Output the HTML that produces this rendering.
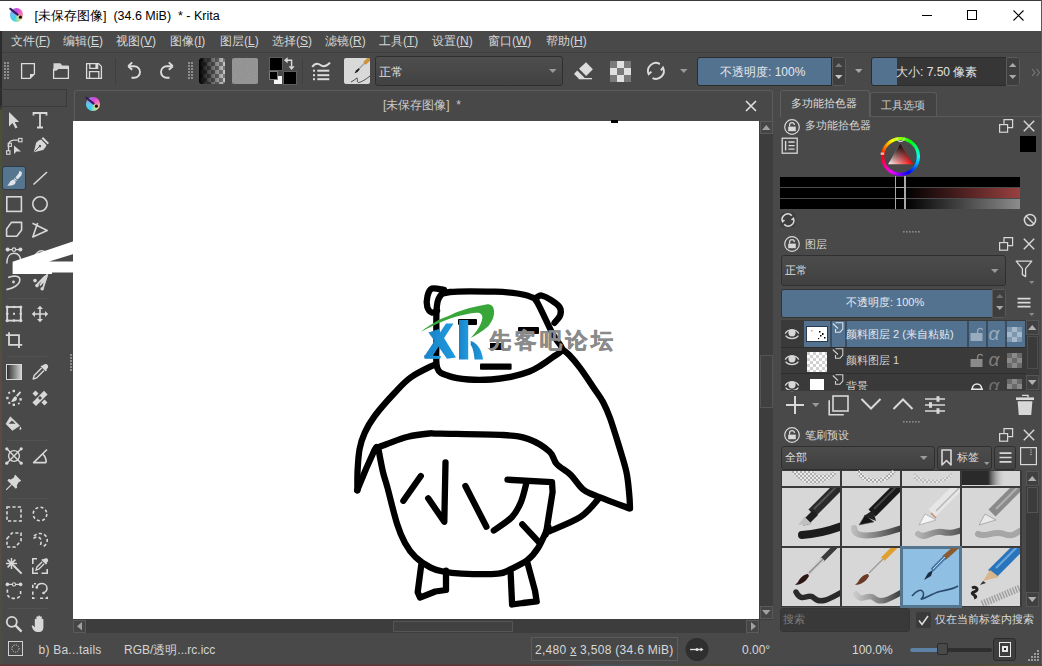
<!DOCTYPE html>
<html><head><meta charset="utf-8">
<style>
*{margin:0;padding:0;box-sizing:border-box}
html,body{width:1042px;height:666px;overflow:hidden;background:#494949;font-family:"Liberation Sans",sans-serif;font-size:12px;color:#d2d2d2}
.a{position:absolute}
.t{position:absolute;white-space:nowrap;line-height:1}
svg{position:absolute;overflow:visible}
</style></head><body>
<!-- window frame -->
<div class="a" style="left:0;top:0;width:1042px;height:666px;background:#494949"></div>
<!-- title bar -->
<div class="a" style="left:0;top:0;width:1042px;height:31px;background:#fff;border-top:1px solid #3a3a3a"></div>
<div class="a" style="left:1041px;top:0;width:1px;height:666px;background:#5a5a48"></div>
<div class="a" style="left:0;top:31px;width:2px;height:632px;background:linear-gradient(#2c2c2c 0,#2c2c2c 75px,#4a5236 80px,#4a5236 300px,#5a4a48 340px,#5a4a48 500px,#4e4e40 560px)"></div>
<div class="a" style="left:0;top:664px;width:1042px;height:2px;background:linear-gradient(90deg,#5a3a3a 0,#573c3c 560px,#46505a 600px,#4a4838 700px,#3e4450 850px,#4e4a38 1000px)"></div>
<div class="t" style="left:34.5px;top:9.5px;font-size:12.5px;color:#000">[未保存图像]&nbsp; (34.6 MiB)&nbsp; * - Krita</div>
<div class="a" style="left:9.7px;top:8.2px;width:13.6px;height:13.6px;border-radius:50%;background:conic-gradient(from 20deg,#e846d8 0deg,#f07ab0 60deg,#f4d890 110deg,#9ce0b0 150deg,#3cd0e8 190deg,#60c8f0 240deg,#8aa0f0 290deg,#c050e0 340deg,#e846d8 360deg)"></div>
<svg style="left:8.5px;top:7px" width="16" height="16"><path d="M1.4 1.8L8.6 7.6" stroke="#3a1a60" stroke-width="2.2" stroke-linecap="round"/><circle cx="11.4" cy="10.2" r="1.6" fill="#111"/></svg>
<!-- window controls -->
<div class="a" style="left:922px;top:15px;width:10px;height:1px;background:#000"></div>
<div class="a" style="left:967px;top:10px;width:10px;height:10px;border:1px solid #000"></div>
<svg style="left:1013px;top:10px" width="11" height="11"><path d="M0.5 0.5L10.5 10.5M10.5 0.5L0.5 10.5" stroke="#000" stroke-width="1.1"/></svg>

<!-- menu bar -->
<div class="a" style="left:2px;top:31px;width:1039px;height:21px;background:#494949"></div>
<div class="a" style="left:2px;top:52px;width:1039px;height:1px;background:#3e3e3e"></div>
<div class="t" style="left:11px;top:35px;font-size:12px;color:#d6d6d6">文件(<u>F</u>)</div>
<div class="t" style="left:63px;top:35px;font-size:12px;color:#d6d6d6">编辑(<u>E</u>)</div>
<div class="t" style="left:116px;top:35px;font-size:12px;color:#d6d6d6">视图(<u>V</u>)</div>
<div class="t" style="left:170px;top:35px;font-size:12px;color:#d6d6d6">图像(<u>I</u>)</div>
<div class="t" style="left:220px;top:35px;font-size:12px;color:#d6d6d6">图层(<u>L</u>)</div>
<div class="t" style="left:272px;top:35px;font-size:12px;color:#d6d6d6">选择(<u>S</u>)</div>
<div class="t" style="left:325px;top:35px;font-size:12px;color:#d6d6d6">滤镜(<u>R</u>)</div>
<div class="t" style="left:379px;top:35px;font-size:12px;color:#d6d6d6">工具(<u>T</u>)</div>
<div class="t" style="left:432px;top:35px;font-size:12px;color:#d6d6d6">设置(<u>N</u>)</div>
<div class="t" style="left:488px;top:35px;font-size:12px;color:#d6d6d6">窗口(<u>W</u>)</div>
<div class="t" style="left:546px;top:35px;font-size:12px;color:#d6d6d6">帮助(<u>H</u>)</div>

<!-- TOOLBAR -->
<!-- grips -->
<svg style="left:4px;top:62px" width="6" height="18"><g fill="#8c8c8c"><rect x="0" y="0" width="2" height="2"/><rect x="3" y="0" width="2" height="2"/><rect x="0" y="3" width="2" height="2"/><rect x="3" y="3" width="2" height="2"/><rect x="0" y="6" width="2" height="2"/><rect x="3" y="6" width="2" height="2"/><rect x="0" y="9" width="2" height="2"/><rect x="3" y="9" width="2" height="2"/><rect x="0" y="12" width="2" height="2"/><rect x="3" y="12" width="2" height="2"/><rect x="0" y="15" width="2" height="2"/><rect x="3" y="15" width="2" height="2"/></g></svg>
<svg style="left:188px;top:62px" width="6" height="18"><g fill="#8c8c8c"><rect x="0" y="0" width="2" height="2"/><rect x="3" y="0" width="2" height="2"/><rect x="0" y="3" width="2" height="2"/><rect x="3" y="3" width="2" height="2"/><rect x="0" y="6" width="2" height="2"/><rect x="3" y="6" width="2" height="2"/><rect x="0" y="9" width="2" height="2"/><rect x="3" y="9" width="2" height="2"/><rect x="0" y="12" width="2" height="2"/><rect x="3" y="12" width="2" height="2"/><rect x="0" y="15" width="2" height="2"/><rect x="3" y="15" width="2" height="2"/></g></svg>
<!-- new doc -->
<svg style="left:20px;top:62px" width="18" height="18"><path d="M1.6 1.6H14.4V12L10 16.4H1.6Z" fill="none" stroke="#dcdcdc" stroke-width="1.3"/><path d="M10 16.4V12H14.4Z" fill="#dcdcdc"/></svg>
<!-- folder -->
<svg style="left:52px;top:62px" width="18" height="18"><path d="M1.5 1.3H8.3L10.3 3.6H16.5V7H6.5L4.3 8.8H1.5Z" fill="#d4d4d4"/><path d="M1.6 6.5V16.4H16.4V4" fill="none" stroke="#dcdcdc" stroke-width="1.3"/></svg>
<!-- save -->
<svg style="left:85px;top:62px" width="18" height="18"><path d="M1.6 1.6H13.6L16.4 4.4V16.4H1.6Z" fill="none" stroke="#dcdcdc" stroke-width="1.3"/><path d="M4.8 1.6V6.4H12.6V1.6" fill="none" stroke="#dcdcdc" stroke-width="1.3"/><rect x="10.4" y="2" width="2.2" height="4" fill="#dcdcdc"/><path d="M4.5 16.4V9.6H13.8V16.4" fill="none" stroke="#dcdcdc" stroke-width="1.3"/></svg>
<div class="a" style="left:115px;top:58px;width:1px;height:26px;background:#3f3f3f"></div>
<!-- undo -->
<svg style="left:126px;top:61px" width="18" height="20"><path d="M3 5.2H8.2A5.8 5.8 0 0 1 8.2 16.8H5.5" fill="none" stroke="#dcdcdc" stroke-width="1.9"/><path d="M2.2 5.2L6.2 1.4M2.2 5.2L6.2 8.8" fill="none" stroke="#dcdcdc" stroke-width="1.9"/></svg>
<!-- redo -->
<svg style="left:157px;top:61px" width="18" height="20"><path d="M15 5.2H9.8A5.8 5.8 0 0 0 9.8 16.8H12.5" fill="none" stroke="#dcdcdc" stroke-width="1.9"/><path d="M15.8 5.2L11.8 1.4M15.8 5.2L11.8 8.8" fill="none" stroke="#dcdcdc" stroke-width="1.9"/></svg>
<!-- gradient swatch -->
<svg style="left:199px;top:58px" width="26" height="26">
<defs><pattern id="chk" width="8" height="8" patternUnits="userSpaceOnUse"><rect width="8" height="8" fill="#cacaca"/><rect width="4" height="4" fill="#7c7c7c"/><rect x="4" y="4" width="4" height="4" fill="#7c7c7c"/></pattern>
<linearGradient id="gbk" x1="0" x2="1"><stop offset="0" stop-color="#000"/><stop offset="1" stop-color="#000" stop-opacity="0"/></linearGradient>
<clipPath id="rr"><rect width="26" height="26" rx="2.5"/></clipPath></defs>
<g clip-path="url(#rr)"><rect width="26" height="26" fill="url(#chk)"/><rect width="26" height="26" fill="url(#gbk)"/></g></svg>
<!-- pattern swatch -->
<svg style="left:232px;top:58px" width="26" height="26"><defs><filter id="nz" x="0" y="0" width="100%" height="100%"><feTurbulence type="fractalNoise" baseFrequency="0.9" numOctaves="2" seed="3"/><feColorMatrix type="matrix" values="0 0 0 0 0.55  0 0 0 0 0.55  0 0 0 0 0.55  0 0 0 0.9 0"/></filter></defs><rect width="26" height="26" rx="2.5" fill="#8c8c8c"/><rect width="26" height="26" rx="2.5" fill="#000" filter="url(#nz)" opacity="0.35"/></svg>
<!-- fg/bg -->
<div class="a" style="left:269px;top:57px;width:14px;height:14px;background:#000;border:1px solid #5e5e5e"></div>
<div class="a" style="left:283px;top:71px;width:14px;height:14px;background:#000;border:1px solid #5e5e5e"></div>
<div class="a" style="left:274px;top:76px;width:8px;height:8px;background:#f4f4f4"></div>
<div class="a" style="left:269px;top:71px;width:9px;height:9px;background:#000;border:1px solid #7a7a7a"></div>
<svg style="left:283px;top:57px" width="14" height="14"><path d="M1 3.2L4.6 0.2V6.2Z" fill="#dcdcdc"/><path d="M4 3.2H8.6V9" fill="none" stroke="#dcdcdc" stroke-width="1.4"/><path d="M5.6 9.2H11.6L8.6 13Z" fill="#dcdcdc"/></svg>
<div class="a" style="left:302px;top:58px;width:1px;height:26px;background:#404040"></div>
<!-- brush presets icon -->
<svg style="left:311px;top:60px" width="21" height="21"><path d="M1.2 6.8C4 3 7 3.2 9.8 5.2S15.5 6.5 19 2.6" fill="none" stroke="#dcdcdc" stroke-width="2"/><g fill="#dcdcdc"><rect x="2" y="9.7" width="2" height="2"/><rect x="6.3" y="9.7" width="12" height="2"/><rect x="2" y="14.2" width="2" height="2"/><rect x="6.3" y="14.2" width="12" height="2"/><rect x="2" y="18.2" width="2" height="2"/><rect x="6.3" y="18.2" width="12" height="2"/></g></svg>
<!-- brush preset swatch -->
<div class="a" style="left:344px;top:58px;width:26px;height:26px;background:#d9d9d9;border-radius:2px;overflow:hidden">
<svg style="left:0;top:0" width="26" height="26"><path d="M10.5 15.5L12 12.5L15 10L16 11L13.5 14Z" fill="#1a1a1a"/><path d="M15.2 10.6L21.5 4.3" stroke="#b8b8b8" stroke-width="1.6"/><path d="M15.2 10.6L21.5 4.3" stroke="#777" stroke-width="0.5"/><path d="M20.5 5.5L26.5 -0.5" stroke="#d0903a" stroke-width="3.8"/><path d="M7 24C10 22.5 12 20.5 13 20S12.5 24.5 14.5 24.5S21 22 26 18" fill="none" stroke="#3a3a3a" stroke-width="0.9"/></svg></div>
<!-- combo -->
<div class="a" style="left:375px;top:56px;width:188px;height:30px;border:1px solid #2f2f2f;border-radius:3px;background:linear-gradient(#4e4e4e,#424242)"></div>
<div class="t" style="left:379px;top:66px;font-size:12px;color:#dedede">正常</div>
<svg style="left:549px;top:69px" width="8" height="4"><path d="M0 0H7.5L3.75 4Z" fill="#9a9a9a"/></svg>
<!-- eraser -->
<svg style="left:573px;top:61px" width="21" height="19"><path d="M13 1.2L19.9 8.2L13.2 14.9L6 7.8Z" fill="#dcdcdc"/><path d="M4.2 9.5L11.6 16.8L10.8 17.6H5.7L1 12.9Z" fill="#dcdcdc"/><rect x="5.7" y="17" width="13.3" height="1.3" fill="#dcdcdc"/></svg>
<!-- checker -->
<svg style="left:610px;top:61px" width="21" height="21"><rect width="21" height="21" fill="#e0e0e0"/><g fill="#7a7a7a"><rect x="0" y="0" width="7" height="7"/><rect x="14" y="0" width="7" height="7"/><rect x="7" y="7" width="7" height="7"/><rect x="0" y="14" width="7" height="7"/><rect x="14" y="14" width="7" height="7"/></g></svg>
<!-- reload -->
<svg style="left:645px;top:61px" width="21" height="20"><path d="M14.85 3.06A7.9 7.9 0 0 0 3.74 13.24L6.4 10.6" fill="none" stroke="#dcdcdc" stroke-width="1.9"/><path d="M7.56 17.06A7.9 7.9 0 0 0 18.06 6.56L15.9 9.4" fill="none" stroke="#dcdcdc" stroke-width="1.9"/></svg>
<svg style="left:680px;top:69px" width="8" height="4"><path d="M0 0H7.5L3.75 4Z" fill="#9a9a9a"/></svg>
<!-- opacity slider -->
<div class="a" style="left:697px;top:57px;width:149px;height:29px;border:1px solid #2c2c2c;border-radius:3px;background:#2c2c2c"></div>
<div class="a" style="left:698px;top:58px;width:133px;height:27px;background:#53728f;border-radius:2px 0 0 2px"></div>
<div class="a" style="left:832px;top:57px;width:14px;height:29px;border:1px solid #5a5a5a;border-radius:0 3px 3px 0;background:#3e3e3e"></div>
<div class="t" style="left:720px;top:66px;font-size:12px;color:#e4e8ec">不透明度: 100%</div>
<svg style="left:835px;top:63px" width="8" height="18"><path d="M0 4H7.5L3.75 0Z" fill="#7a7a7a"/><path d="M0 12H7.5L3.75 16Z" fill="#c8c8c8"/></svg>
<svg style="left:855px;top:69px" width="8" height="4"><path d="M0 0H7.5L3.75 4Z" fill="#a8a8a8"/></svg>
<!-- size slider -->
<div class="a" style="left:871px;top:57px;width:149px;height:29px;border:1px solid #2c2c2c;border-radius:3px;background:#363636"></div>
<div class="a" style="left:872px;top:58px;width:25px;height:27px;background:#53728f;border-radius:2px 0 0 2px"></div>
<div class="a" style="left:1006px;top:57px;width:14px;height:29px;border:1px solid #5a5a5a;border-radius:0 3px 3px 0;background:#3e3e3e"></div>
<div class="t" style="left:896px;top:66px;font-size:12px;color:#e0e0e0">大小: 7.50 像素</div>
<svg style="left:1009px;top:63px" width="8" height="18"><path d="M0 4H7.5L3.75 0Z" fill="#a8a8a8"/><path d="M0 12H7.5L3.75 16Z" fill="#a8a8a8"/></svg>
<svg style="left:1031px;top:68px" width="10" height="9"><path d="M1 1L4 4.5L1 8M5.5 1L8.5 4.5L5.5 8" fill="none" stroke="#7a7a7a" stroke-width="1.1"/></svg>


<!-- TOOLBOX -->
<div class="a" style="left:0px;top:89px;width:67px;height:18px;border:1px solid #3a3a3a;border-left:none"></div>
<div id="toolbox"><svg style="left:5px;top:111px" width="18" height="18"><path d="M4 1V15.5L7.5 12L10.5 17.5L12.5 16.5L9.7 11H14.2Z" fill="#d8d8d8"/></svg>
<svg style="left:31px;top:111px" width="18" height="18"><path d="M2.5 4.5V2H15.5V4.5M9 2V16.5M6 16.5H12" fill="none" stroke="#d8d8d8" stroke-width="1.8"/></svg>
<svg style="left:5px;top:137px" width="18" height="18"><path d="M3.5 14V8Q4 3.5 9 3.2H14" fill="none" stroke="#d8d8d8" stroke-width="1.3"/><rect x="1.6" y="13.8" width="3.4" height="3.4" fill="none" stroke="#d8d8d8" stroke-width="1.1"/><rect x="3.2" y="6.2" width="3.2" height="3.2" fill="none" stroke="#d8d8d8" stroke-width="1.1"/><rect x="13.6" y="1.4" width="3.4" height="3.4" fill="none" stroke="#d8d8d8" stroke-width="1.1"/><path d="M9 8.5V17L11.5 14.6L16 14.6Z" fill="#d8d8d8"/></svg>
<svg style="left:31px;top:137px" width="18" height="18"><g transform="translate(9.5 8.5) rotate(45)"><path d="M0 9.5L-5 1.2Q-5.4 -2.8 -3.8 -4.6H3.8Q5.4 -2.8 5 1.2Z" fill="#d8d8d8"/><rect x="-4.2" y="-7.8" width="8.4" height="2" fill="#d8d8d8"/><circle cx="0" cy="0.8" r="1.2" fill="#494949"/><path d="M0 2V8.6" stroke="#494949" stroke-width="0.9"/></g></svg>
<div class="a" style="left:2px;top:166px;width:24px;height:24px;background:#56758f;border:1px solid #2e3a46;border-radius:3px"></div>
<svg style="left:5px;top:169px" width="18" height="18"><path d="M14.6 1.8L17 3.2L16.4 6.5L12.5 10.5L10.4 8.6L13.6 4.6Z" fill="#dfe5ea"/><path d="M9.2 9.5L11.6 11.6" stroke="#dfe5ea" stroke-width="1.2"/><path d="M8.2 10.5C10 10.8 11 12.2 10.6 13.8C9.8 16.2 7 16.8 2 16.6C4 15.5 3.8 14 5.6 12Z" fill="#dfe5ea"/></svg>
<svg style="left:31px;top:169px" width="18" height="18"><path d="M2.5 15.5L16 3" fill="none" stroke="#d8d8d8" stroke-width="1.6"/></svg>
<svg style="left:5px;top:195px" width="18" height="18"><rect x="1.8" y="1.8" width="14.6" height="14.6" fill="none" stroke="#d8d8d8" stroke-width="1.6"/></svg>
<svg style="left:31px;top:195px" width="18" height="18"><circle cx="9" cy="9" r="7.2" fill="none" stroke="#d8d8d8" stroke-width="1.6"/></svg>
<svg style="left:5px;top:221px" width="18" height="18"><path d="M1.6 8L6.4 1.4H16.6V9L11.8 15.2H1.6Z" fill="none" stroke="#d8d8d8" stroke-width="1.6" stroke-linejoin="round"/></svg>
<svg style="left:31px;top:221px" width="18" height="18"><path d="M1.5 2.2L16.2 9.5L1.8 16L6.6 2" fill="none" stroke="#d8d8d8" stroke-width="1.6" stroke-linejoin="round"/></svg>
<svg style="left:5px;top:247px" width="18" height="18"><path d="M1.8 16.5C1.8 10 4.8 6.3 9 6.3S16 10 16 16.5" fill="none" stroke="#d8d8d8" stroke-width="1.5"/><path d="M2 2.6H16" fill="none" stroke="#d8d8d8" stroke-width="1.2"/><circle cx="2.6" cy="2.6" r="2" fill="#d8d8d8"/><circle cx="15.4" cy="2.6" r="2" fill="#d8d8d8"/><circle cx="9" cy="2.6" r="1.8" fill="#494949" stroke="#d8d8d8" stroke-width="1.2"/></svg>
<svg style="left:31px;top:247px" width="18" height="18"><path d="M2 14C3 7 8 3 12 4S16 9 14 12" fill="none" stroke="#d8d8d8" stroke-width="1.5"/></svg>
<svg style="left:5px;top:273px" width="18" height="18"><path d="M1.4 16.6C8 15.5 14.5 12 14.8 7C15 3 9 2 3.2 4.6" fill="none" stroke="#d8d8d8" stroke-width="1.6"/><circle cx="8.5" cy="9" r="1.4" fill="#d8d8d8"/></svg>
<svg style="left:31px;top:273px" width="18" height="18"><path d="M16.5 1.2L14 8L12 11L10 9L7 12L5.8 10.4L13 3Z" fill="#d8d8d8"/><path d="M16.5 1.2L9 12.5M16.5 1.2L12 15" fill="none" stroke="#d8d8d8" stroke-width="1.8"/><circle cx="4" cy="7.6" r="1.8" fill="#d8d8d8"/><circle cx="6" cy="12.6" r="1.8" fill="#d8d8d8"/><circle cx="11.2" cy="15.8" r="1.8" fill="#d8d8d8"/></svg>
<div class="a" style="left:7px;top:298px;width:40px;height:1px;background:#525252"></div>
<svg style="left:5px;top:305px" width="18" height="18"><rect x="2.2" y="2" width="13.6" height="13.6" fill="none" stroke="#d8d8d8" stroke-width="1.8"/><g fill="#d8d8d8"><circle cx="2.2" cy="2" r="1.6"/><circle cx="15.8" cy="2" r="1.6"/><circle cx="2.2" cy="15.6" r="1.6"/><circle cx="15.8" cy="15.6" r="1.6"/><circle cx="9" cy="2" r="1.3"/><circle cx="9" cy="15.6" r="1.3"/><circle cx="2.2" cy="8.8" r="1.3"/><circle cx="15.8" cy="8.8" r="1.3"/><rect x="8" y="7.8" width="2" height="2"/></g></svg>
<svg style="left:31px;top:305px" width="18" height="18"><path d="M9 2V16M2 9H16" fill="none" stroke="#d8d8d8" stroke-width="1.6"/><path d="M9 0.8L12 4H6Z M9 17.2L12 14H6Z M0.8 9L4 6V12Z M17.2 9L14 6V12Z" fill="#d8d8d8"/></svg>
<svg style="left:5px;top:331px" width="18" height="18"><path d="M4 1.2V13.8H17.2M0.8 4.2H14V17" fill="none" stroke="#d8d8d8" stroke-width="1.8"/></svg>
<div class="a" style="left:7px;top:356px;width:40px;height:1px;background:#525252"></div>
<div class="a" style="left:6px;top:364px;width:16px;height:16px;border:1.5px solid #d8d8d8;background:linear-gradient(90deg,#2e2e2e,#d0d0d0)"></div>
<svg style="left:31px;top:363px" width="18" height="18"><path d="M12.6 1.8C14 0.6 16.4 1 17 2.8S16.4 5.6 15.6 6.2L15.8 7.6L14.6 8.2L9.6 3.4L10.6 2.4L11.6 2.6Z" fill="#d8d8d8"/><path d="M10.6 5L3.2 12.4L2.2 16L5.8 14.8L13 7.6" fill="none" stroke="#d8d8d8" stroke-width="1.4" stroke-linejoin="round"/></svg>
<svg style="left:5px;top:389px" width="18" height="18"><g fill="#d8d8d8"><path d="M14.8 2.2L16.2 3.4L12.6 7.8L11 6.6Z"/><path d="M10.2 7.2C11.8 7.6 12.4 9 11.8 10.6C10.8 12.8 8.2 13 5.8 12.4C7.6 11.4 7.2 9.4 10.2 7.2Z"/><rect x="1.2" y="7.8" width="2.4" height="2.4"/><rect x="14.4" y="9.2" width="2.4" height="2.4"/><rect x="7.6" y="14.6" width="2.4" height="2.4"/><rect x="7.6" y="0.8" width="2.4" height="2.4"/><path d="M3 3.2L4.8 2.6L5.4 4.4L3.6 5Z"/><path d="M3 13.6L4.8 12.6L5.6 14.4L3.8 15.2Z"/><path d="M12.6 14.2L14.2 13.2L15 14.8L13.4 15.8Z"/></g></svg>
<svg style="left:31px;top:389px" width="18" height="18"><g fill="#d8d8d8"><path d="M13 1.8L16.6 5.4L5 17L1.4 13.4Z"/></g><g fill="#494949"><rect x="7.6" y="7.6" width="2.8" height="2.8" transform="rotate(45 9 9)"/></g><g fill="#d8d8d8"><rect x="2.4" y="2.4" width="4.2" height="4.2" transform="rotate(45 4.5 4.5)"/><rect x="11.4" y="11.4" width="4.2" height="4.2" transform="rotate(45 13.5 13.5)"/></g></svg>
<svg style="left:5px;top:415px" width="18" height="18"><path d="M5.3 1.8L14.6 10.7L7.4 15.4L1 8.9Z" fill="#d8d8d8" stroke="#d8d8d8" stroke-width="0.6" stroke-linejoin="round"/><path d="M3.6 8.7L6.9 5.4L10.6 8.7Z" fill="#494949"/><path d="M15.4 11.4C16.6 13 16.8 14.8 15.4 14.8S14.2 13 15.4 11.4Z" fill="#d8d8d8"/></svg>
<div class="a" style="left:7px;top:440px;width:40px;height:1px;background:#525252"></div>
<svg style="left:5px;top:447px" width="18" height="18"><path d="M1.8 1.8L16.2 16.2M16.2 1.8L1.8 16.2" fill="none" stroke="#d8d8d8" stroke-width="1.4"/><circle cx="9" cy="9" r="5.4" fill="none" stroke="#d8d8d8" stroke-width="1.4"/><g fill="#d8d8d8"><circle cx="1.8" cy="1.8" r="1.6"/><circle cx="16.2" cy="1.8" r="1.6"/><circle cx="1.8" cy="16.2" r="1.6"/><circle cx="16.2" cy="16.2" r="1.6"/></g></svg>
<svg style="left:31px;top:447px" width="18" height="18"><path d="M16 2.5L2.6 15.6H15.2" fill="none" stroke="#d8d8d8" stroke-width="1.6" stroke-linejoin="round"/><path d="M11.8 7.2C14 9 15.2 12 15.2 15.6" fill="none" stroke="#d8d8d8" stroke-width="1.6"/></svg>
<svg style="left:5px;top:473px" width="18" height="18"><path d="M10 1.6L16.2 7.8L13.4 9.4L11.8 12.4L12.2 14.6L10.8 15.8L2.4 7.4L3.6 6L5.8 6.4L8.8 4.8Z" fill="#d8d8d8"/><path d="M6.6 11.4L1.2 16.8" fill="none" stroke="#d8d8d8" stroke-width="1.2"/></svg>
<div class="a" style="left:7px;top:498px;width:40px;height:1px;background:#525252"></div>
<svg style="left:5px;top:505px" width="18" height="18"><rect x="2" y="2" width="14" height="14" fill="none" stroke="#d8d8d8" stroke-width="1.6" stroke-dasharray="3.2 2.2"/></svg>
<svg style="left:31px;top:505px" width="18" height="18"><circle cx="9" cy="9" r="6.8" fill="none" stroke="#d8d8d8" stroke-width="1.6" stroke-dasharray="3 2.4"/></svg>
<svg style="left:5px;top:531px" width="18" height="18"><path d="M2 7.6L7 2H16V10L10.2 16H2Z" fill="none" stroke="#d8d8d8" stroke-width="1.6" stroke-dasharray="3.2 2.2"/></svg>
<svg style="left:31px;top:531px" width="18" height="18"><path d="M3 5C6 1.5 13 1.5 15.5 6S14 15.5 11 16" fill="none" stroke="#d8d8d8" stroke-width="1.6" stroke-dasharray="3.2 2.2"/><path d="M2.5 7.5C5 5 9.5 6 10 9S9.5 14 9 15" fill="none" stroke="#d8d8d8" stroke-width="1.6" stroke-dasharray="3.2 2.2"/></svg>
<svg style="left:5px;top:557px" width="18" height="18"><path d="M6.5 1V12M1 6.5H12M2.6 2.6L10.4 10.4M10.4 2.6L2.6 10.4" fill="none" stroke="#d8d8d8" stroke-width="1.5"/><path d="M9 9L16.6 16.6" fill="none" stroke="#d8d8d8" stroke-width="2"/></svg>
<svg style="left:31px;top:557px" width="18" height="18"><path d="M1.8 7V1.8H6M1.8 10.5V16.2H7M10.5 16.2H16.2V12" fill="none" stroke="#d8d8d8" stroke-width="1.6"/><path d="M13 2C14.2 0.8 16.4 1 17 2.6S16.6 5 15.8 5.6L16 6.8L15 7.6L10.4 3L11.2 2L12 2.2Z" fill="#d8d8d8"/><path d="M11.2 4.8L5.8 10.2L5 13L7.8 12.2L13.2 6.8" fill="none" stroke="#d8d8d8" stroke-width="1.3"/></svg>
<svg style="left:5px;top:582px" width="18" height="18"><path d="M2.4 7.5V11.5C2.4 14 4.5 16.4 9 16.4S15.6 14 15.6 11.5V7.5" fill="none" stroke="#d8d8d8" stroke-width="1.6" stroke-dasharray="3.2 2.2"/><path d="M2.4 2.4H15.6" fill="none" stroke="#d8d8d8" stroke-width="1.2"/><circle cx="2.4" cy="2.4" r="1.8" fill="#d8d8d8"/><circle cx="15.6" cy="2.4" r="1.8" fill="#d8d8d8"/><circle cx="9" cy="2.4" r="1.6" fill="#494949" stroke="#d8d8d8" stroke-width="1.1"/></svg>
<svg style="left:31px;top:582px" width="18" height="18"><path d="M1.8 6V1.8H5M1.8 9.5V16.2H6M9 16.2H16.2V13" fill="none" stroke="#d8d8d8" stroke-width="1.6" stroke-dasharray="3.2 2.2"/><path d="M6 5C6.5 2.5 8.5 1.6 11 1.6C14 1.6 16 3.8 16 6.5C16 9 14.5 10 12.5 11" fill="none" stroke="#d8d8d8" stroke-width="1.5"/><circle cx="5.8" cy="5.4" r="1.3" fill="#d8d8d8"/><circle cx="12.5" cy="11" r="1.3" fill="#d8d8d8"/></svg>
<div class="a" style="left:7px;top:608px;width:40px;height:1px;background:#525252"></div>
<svg style="left:5px;top:615px" width="18" height="18"><circle cx="6.8" cy="6.8" r="5" fill="none" stroke="#d8d8d8" stroke-width="1.8"/><path d="M10.4 10.4L16.6 16.6" fill="none" stroke="#d8d8d8" stroke-width="2.4"/></svg>
<svg style="left:31px;top:615px" width="18" height="18"><path d="M3.8 9.5V4.6C3.8 3.6 5.4 3.6 5.4 4.6V8.5V2C5.4 1 7.2 1 7.2 2V8V1.2C7.2 0.2 9 0.2 9 1.2V8V2C9 1 10.8 1 10.8 2V8.6V4.4C10.8 3.4 12.4 3.4 12.4 4.4V12C12.4 15 11 17 8 17H6.4C4.4 17 3 16 1.8 14L0.8 11.6C0.4 10.6 1.6 10 2.4 10.8L3.8 12.4Z" fill="#d8d8d8"/></svg>
<svg style="left:70px;top:354px" width="3" height="18"><g fill="#8a8a8a"><rect y="0" width="2" height="2"/><rect y="3" width="2" height="2"/><rect y="6" width="2" height="2"/><rect y="9" width="2" height="2"/><rect y="12" width="2" height="2"/><rect y="15" width="2" height="2"/></g></svg></div>
<svg style="left:0;top:0" width="80" height="300"><path d="M73.5 241.2L12.6 261.8V274H52V272.6H73.5V261.6H49.2L73.5 254Z" fill="#fff"/></svg>
<!-- canvas tab area -->
<div class="a" style="left:74px;top:90px;width:699px;height:31px;background:#484848;border:1px solid #5c5c5c;border-bottom:none;border-radius:3px 3px 0 0"></div>
<div class="a" style="left:86.2px;top:97.2px;width:13.6px;height:13.6px;border-radius:50%;background:conic-gradient(from 20deg,#e846d8 0deg,#f07ab0 60deg,#f4d890 110deg,#9ce0b0 150deg,#3cd0e8 190deg,#60c8f0 240deg,#8aa0f0 290deg,#c050e0 340deg,#e846d8 360deg)"></div>
<svg style="left:85px;top:96px" width="16" height="16"><path d="M1.4 1.8L8.6 7.6" stroke="#3a1a60" stroke-width="2.2" stroke-linecap="round"/><circle cx="11.4" cy="10.2" r="1.6" fill="#111"/></svg>
<div class="t" style="left:383px;top:99px;font-size:12px;color:#c8c8c8">[未保存图像]&nbsp; *</div>
<svg style="left:745px;top:100px" width="12" height="12"><path d="M1 1L11 11M11 1L1 11" stroke="#e0e0e0" stroke-width="1.6"/></svg>
<!-- canvas -->
<div class="a" style="left:73px;top:121px;width:686px;height:499px;background:#fff"></div>
<svg style="left:0;top:0" width="1042" height="666">
<g fill="none" stroke="#000" stroke-width="6.3" stroke-linecap="round" stroke-linejoin="round">
<path d="M436.5 340.0C436.4 330.7 436.1 319.0 436.5 312.0C436.9 305.0 436.8 301.3 439.0 298.0C441.2 294.7 440.7 293.1 450.0 292.0C459.3 290.9 483.8 291.4 495.0 291.7C506.2 291.9 511.5 292.6 517.5 293.5C523.5 294.4 527.7 295.5 531.0 297.0C534.3 298.5 533.7 296.3 537.3 302.5C540.9 308.7 548.6 326.2 552.7 334.0C556.8 341.8 562.0 345.2 562.0 349.0C562.0 352.8 556.7 354.2 553.0 357.0C549.3 359.8 543.9 363.6 540.0 366.0C536.1 368.4 534.1 369.7 529.4 371.5C524.7 373.3 518.3 375.3 512.0 376.6C505.7 377.9 498.7 379.0 491.4 379.5C484.1 380.0 475.5 380.1 468.4 379.5C461.3 378.9 454.0 377.9 448.8 376.0C443.6 374.1 439.4 374.0 437.3 368.0C435.2 362.0 436.6 349.3 436.5 340.0Z"/>
<path d="M444.0 290.0C442.0 289.8 434.8 287.5 432.0 288.5C429.2 289.5 428.3 292.9 427.5 296.0C426.7 299.1 426.6 304.2 427.3 307.0C428.1 309.8 430.4 312.0 432.0 312.6C433.6 313.2 436.2 310.9 437.0 310.5"/>
<path d="M537.5 297.0C538.2 296.8 539.3 295.0 541.5 295.5C543.7 296.0 547.8 297.9 550.8 299.8C553.8 301.7 557.9 304.5 559.5 307.0C561.1 309.5 561.1 312.4 560.3 315.0C559.5 317.6 555.5 321.5 554.5 322.8"/>
<path d="M435.3 364.2C431.2 366.4 417.8 372.4 411.0 377.2C404.2 382.0 400.6 386.5 394.5 393.0C388.4 399.5 379.6 409.4 374.7 416.0C369.8 422.6 367.3 427.1 364.8 432.6C362.3 438.1 360.8 442.8 359.6 449.0C358.4 455.2 358.0 463.1 357.6 470.0C357.2 476.9 357.4 486.9 357.4 490.3"/>
<path d="M357.2 490.3L366.0 469.0L374.4 450.3L376.5 447.0"/>
<path d="M376.5 448.0C378.2 447.3 381.8 445.9 387.0 444.0C392.2 442.1 401.0 438.4 408.0 436.7C415.0 434.9 423.7 434.0 429.0 433.5C434.3 433.0 427.7 433.4 440.0 433.6C452.3 433.9 488.3 434.1 503.0 435.0C517.7 435.9 520.6 436.2 528.3 439.0C536.0 441.8 544.7 447.3 549.4 451.5C554.1 455.7 553.2 460.1 556.7 464.0C560.2 467.9 566.0 470.4 570.4 474.6C574.8 478.8 578.8 485.9 583.0 489.4C587.2 492.9 587.9 492.5 595.6 495.7C603.3 498.9 623.4 506.2 629.0 508.3"/>
<path d="M562.0 349.0C563.2 350.0 566.2 351.9 569.2 355.0C572.2 358.1 575.9 362.4 580.0 367.8C584.1 373.2 589.8 382.0 593.6 387.7C597.4 393.4 600.3 396.9 603.0 402.0C605.7 407.1 607.3 410.5 610.0 418.0C612.7 425.5 616.5 437.9 619.3 447.0C622.0 456.1 624.8 464.3 626.5 472.3C628.2 480.3 628.7 489.0 629.3 495.0C629.9 501.0 629.9 506.1 630.0 508.3"/>
<path d="M378.6 450.0C379.3 453.6 381.4 465.1 382.8 471.3C384.2 477.5 384.9 478.2 387.3 487.0C389.7 495.8 394.2 515.0 397.2 524.3C400.1 533.6 402.0 537.5 405.0 543.0C408.0 548.5 411.1 552.9 415.4 557.0C419.7 561.1 426.1 565.2 430.7 567.6C435.3 570.0 437.9 570.5 443.0 571.5C448.1 572.5 452.2 573.2 461.4 573.6C470.6 574.0 490.1 574.3 498.3 573.6C506.5 572.9 505.7 571.5 510.6 569.2C515.5 566.9 522.9 563.6 527.5 560.0C532.1 556.4 534.7 553.2 538.2 547.7C541.7 542.2 546.6 530.3 548.3 526.8"/>
<path d="M597.9 499.5C595.0 502.4 588.8 511.5 580.5 516.9C572.2 522.3 553.7 529.2 548.3 531.7"/>
<path d="M420.8 476.0L403.4 500.8"/>
<path d="M445.5 462.4L444.3 521.8L428.2 498.3"/>
<path d="M465.4 486.0L486.4 526.8"/>
<path d="M507.5 479.7L552.0 482.2L552.6 492.0L545.9 534.2"/>
<path d="M526.0 484.7C525.2 487.6 523.3 496.6 521.0 502.0C518.7 507.4 516.5 512.2 512.0 517.0C507.5 521.8 496.8 528.2 493.8 530.5"/>
<path d="M522.3 524.3L538.4 541.6"/>
<path d="M421.5 563.0L417.7 592.2L420.0 597.6L435.3 591.5L446.0 590.0L446.0 570.7"/>
<path d="M510.6 572.3L512.1 604.5L522.9 603.0L536.7 601.4L535.0 590.7L527.5 563.0"/>
</g>
<g fill="#000">
<rect x="480" y="363.4" width="31.6" height="6.3" rx="1"/>
<rect x="458" y="319" width="19" height="6" rx="1"/>
<rect x="518" y="327" width="21" height="7" rx="1"/>
<rect x="490" y="343" width="12" height="7"/>
<rect x="611" y="120" width="7" height="3"/>
</g>
<path d="M420.9 331.7C430 325 440 318.5 447.3 316.6C458 311 468 307.5 486.3 304.4C491 304 494 306 494.1 312C494 318 491.5 322 488.2 326.3C482 332 476 335 470.7 338C476 332 481 326 482.4 318C482.5 314 480 312.5 476.5 312.7C470 313 452 317 442.4 321.5C436 324 428 328 420.9 331.7Z" fill="#39a63a"/>
<defs><linearGradient id="blu" x1="0" x2="1"><stop offset="0" stop-color="#1b82c6"/><stop offset="1" stop-color="#1f9be0"/></linearGradient></defs>
<g fill="url(#blu)">
<path d="M428.5 332.5L438.5 329L456 357.6L447 358.8Z"/>
<path d="M446 323.4L453.5 323.4L431 358.5L424.5 356Z"/>
<path d="M424 355.5L441 356L440 359L424.5 358.8Z"/>
<rect x="459" y="320" width="9.2" height="39.5"/>
<path d="M470.7 341C477 342.5 482 350 483 359.5H474.5C474 352 472.5 347 470.7 345Z"/>
</g>
<g font-family="'Liberation Serif',serif" font-weight="900" font-size="22" fill="#8a8a8a" stroke="#8a8a8a" stroke-width="0.5" style="text-rendering:geometricPrecision">
<text x="489" y="348">先</text><text x="514.5" y="348">客</text><text x="540" y="348">吧</text><text x="565.5" y="348">论</text><text x="591" y="348">坛</text>
</g>
</svg>

<!-- v scrollbar -->
<div class="a" style="left:759px;top:121px;width:14px;height:499px;background:#3d3d3d"></div>
<!-- h scrollbar -->
<div class="a" style="left:73px;top:619px;width:687px;height:14px;background:#3d3d3d"></div>

<!-- status bar -->
<!--STATUS-->
<!-- v scrollbar parts -->
<div class="a" style="left:760px;top:121px;width:13px;height:13px;border:1px solid #5a5a5a;background:#454545"></div>
<svg style="left:762px;top:125px" width="9" height="5"><path d="M0 5H8.5L4.25 0Z" fill="#a0a0a0"/></svg>
<div class="a" style="left:760px;top:606px;width:13px;height:13px;border:1px solid #5a5a5a;background:#454545"></div>
<svg style="left:762px;top:610px" width="9" height="5"><path d="M0 0H8.5L4.25 5Z" fill="#a0a0a0"/></svg>
<div class="a" style="left:760px;top:355px;width:13px;height:53px;border:1px solid #555;background:#404040"></div>
<svg style="left:776px;top:353px" width="3" height="19"><g fill="#8a8a8a"><rect y="0" width="1.6" height="1.6"/><rect y="3" width="1.6" height="1.6"/><rect y="6" width="1.6" height="1.6"/><rect y="9" width="1.6" height="1.6"/><rect y="12" width="1.6" height="1.6"/><rect y="15" width="1.6" height="1.6"/></g></svg>
<!-- h scrollbar parts -->
<div class="a" style="left:73px;top:620px;width:13px;height:13px;border:1px solid #5a5a5a;background:#454545"></div>
<svg style="left:77px;top:622px" width="5" height="9"><path d="M5 0V8.5L0 4.25Z" fill="#a0a0a0"/></svg>
<div class="a" style="left:746px;top:620px;width:13px;height:13px;border:1px solid #5a5a5a;background:#454545"></div>
<svg style="left:751px;top:622px" width="5" height="9"><path d="M0 0V8.5L5 4.25Z" fill="#a0a0a0"/></svg>
<div class="a" style="left:393px;top:621px;width:120px;height:11px;border:1px solid #555;background:#414141"></div>
<div class="a" style="left:760px;top:620px;width:13px;height:13px;background:#494949"></div>
<!-- status bar -->
<div class="a" style="left:8px;top:641px;width:15px;height:15px;border:1.2px solid #d0d0d0"></div>
<svg style="left:10px;top:643px" width="11" height="11"><circle cx="5.5" cy="5.5" r="3.6" fill="none" stroke="#d0d0d0" stroke-width="1" stroke-dasharray="1.2 1.2"/></svg>
<div class="t" style="left:38.5px;top:644px;font-size:12px;color:#d4d4d4;letter-spacing:0.23px">b) Ba...tails</div>
<div class="t" style="left:124px;top:644px;font-size:12px;color:#d4d4d4">RGB/透明...rc.icc</div>
<div class="a" style="left:531px;top:637px;width:147px;height:24px;border:1px solid #5c5c5c;background:#474747"></div>
<div class="t" style="left:535px;top:644px;font-size:12px;color:#d8d8d8;letter-spacing:0.3px">2,480 <u>x</u> 3,508 (34.6 MiB)</div>
<svg style="left:685px;top:638px" width="24" height="24"><circle cx="12" cy="11.5" r="11.5" fill="#2f2f2f"/><path d="M5 11.5H17" stroke="#e0e0e0" stroke-width="1.3"/><circle cx="12" cy="11.5" r="1.5" fill="#e0e0e0"/><path d="M15.5 9.5L18.5 11.5L15.5 13.5Z" fill="#e0e0e0"/></svg>
<div class="t" style="left:742px;top:644px;font-size:12px;color:#d8d8d8">0.00°</div>
<div class="t" style="left:852px;top:644px;font-size:12px;color:#d8d8d8">100.0%</div>
<div class="a" style="left:910px;top:648px;width:82px;height:4px;border-radius:2px;background:#2f2f2f"></div>
<div class="a" style="left:910px;top:648px;width:30px;height:4px;border-radius:2px;background:#5d82a6"></div>
<div class="a" style="left:937px;top:643px;width:11px;height:12px;border-radius:2px;background:#4a4a4a;border:1px solid #2a2a2a"></div>
<div class="a" style="left:993px;top:638px;width:23px;height:23px;border-radius:3px;background:#3e3e3e;border:1px solid #2c2c2c"></div>
<div class="a" style="left:999px;top:642px;width:12px;height:15px;border:1.3px solid #e8e8e8"></div>
<div class="a" style="left:1002px;top:646px;width:6px;height:6px;background:#e8e8e8"></div>
<div class="a" style="left:1004px;top:648px;width:2px;height:2px;background:#222"></div>
<svg style="left:1025px;top:650px" width="16" height="14"><g fill="#9a9a9a"><rect x="12" y="0" width="2" height="2"/><rect x="9" y="3" width="2" height="2"/><rect x="12" y="3" width="2" height="2"/><rect x="6" y="6" width="2" height="2"/><rect x="9" y="6" width="2" height="2"/><rect x="12" y="6" width="2" height="2"/><rect x="3" y="9" width="2" height="2"/><rect x="6" y="9" width="2" height="2"/><rect x="9" y="9" width="2" height="2"/><rect x="12" y="9" width="2" height="2"/></g></svg>

<!--/STATUS-->

<!-- right dockers -->
<!--DOCK-->
<div class="a" style="left:773px;top:90px;width:7px;height:574px;background:#494949"></div>
<div class="a" style="left:870px;top:92px;width:67px;height:25px;background:#434343;border:1px solid #5a5a5a;border-bottom:none;border-radius:3px 3px 0 0"></div>
<div class="a" style="left:780px;top:116px;width:262px;height:1px;background:#5a5a5a"></div>
<div class="a" style="left:780px;top:90px;width:90px;height:27px;background:#494949;border:1px solid #5e5e5e;border-bottom:none;border-radius:3px 3px 0 0"></div>
<div class="t" style="left:791px;top:98px;font-size:11px;color:#dcdcdc;">多功能拾色器</div>
<div class="t" style="left:881px;top:99.5px;font-size:11px;color:#d0d0d0;">工具选项</div>
<svg style="left:784px;top:118.5px" width="16" height="16"><circle cx="8" cy="8" r="7.3" fill="none" stroke="#d8d8d8" stroke-width="1.2"/><rect x="4.2" y="7.6" width="7.6" height="4.6" fill="#d8d8d8"/><path d="M5.6 7.6V6A2.4 2.4 0 0 1 10.4 6" fill="none" stroke="#d8d8d8" stroke-width="1.2"/></svg>
<div class="t" style="left:805px;top:120px;font-size:11px;color:#d6d6d6;">多功能拾色器</div>
<svg style="left:999px;top:119px" width="15" height="14"><rect x="0.6" y="5.6" width="8" height="7.6" fill="none" stroke="#d8d8d8" stroke-width="1.2"/><path d="M5 5.6V0.6H13.6V8.6H8.6" fill="none" stroke="#d8d8d8" stroke-width="1.2"/></svg>
<svg style="left:1023px;top:119.5px" width="12" height="12"><path d="M0.8 0.8L11.2 11.2M11.2 0.8L0.8 11.2" stroke="#d8d8d8" stroke-width="1.4"/></svg>
<svg style="left:781px;top:137px" width="18" height="18"><rect x="1.2" y="1.2" width="15" height="15" fill="none" stroke="#d8d8d8" stroke-width="1.3"/><path d="M4.6 4V13.4" stroke="#d8d8d8" stroke-width="1.4"/><path d="M7.4 5H13.6M7.4 8.6H13.6M7.4 12.2H13.6" stroke="#d8d8d8" stroke-width="1.3"/></svg>
<div class="a" style="left:1020px;top:136px;width:16px;height:16px;background:#000"></div>
<svg style="left:880px;top:136px" width="41" height="41"><defs><clipPath id="ring"><path d="M0 -19.5A19.5 19.5 0 1 1 0 19.5A19.5 19.5 0 1 1 0 -19.5ZM0 -16.3A16.3 16.3 0 1 0 0 16.3A16.3 16.3 0 1 0 0 -16.3Z" clip-rule="evenodd" fill-rule="evenodd"/></clipPath><linearGradient id="tri1" x1="0" y1="0" x2="1" y2="0"><stop offset="0" stop-color="#fff"/><stop offset="1" stop-color="#f00"/></linearGradient><linearGradient id="tri2" x1="0" y1="0" x2="0" y2="1"><stop offset="0" stop-color="#000"/><stop offset="1" stop-color="#000" stop-opacity="0"/></linearGradient></defs><g transform="translate(20.5 20.5)"><g clip-path="url(#ring)"><path d="M0 0L20.00 0.00L19.87 2.26Z" fill="hsl(180,100%,50%)"/><path d="M0 0L19.92 1.74L19.60 3.99Z" fill="hsl(185,100%,50%)"/><path d="M0 0L19.70 3.47L19.18 5.68Z" fill="hsl(190,100%,50%)"/><path d="M0 0L19.32 5.18L18.61 7.33Z" fill="hsl(195,100%,50%)"/><path d="M0 0L18.79 6.84L17.90 8.92Z" fill="hsl(200,100%,50%)"/><path d="M0 0L18.13 8.45L17.05 10.45Z" fill="hsl(205,100%,50%)"/><path d="M0 0L17.32 10.00L16.08 11.90Z" fill="hsl(210,100%,50%)"/><path d="M0 0L16.38 11.47L14.98 13.25Z" fill="hsl(215,100%,50%)"/><path d="M0 0L15.32 12.86L13.77 14.51Z" fill="hsl(220,100%,50%)"/><path d="M0 0L14.14 14.14L12.45 15.65Z" fill="hsl(225,100%,50%)"/><path d="M0 0L12.86 15.32L11.04 16.68Z" fill="hsl(230,100%,50%)"/><path d="M0 0L11.47 16.38L9.54 17.58Z" fill="hsl(235,100%,50%)"/><path d="M0 0L10.00 17.32L7.97 18.34Z" fill="hsl(240,100%,50%)"/><path d="M0 0L8.45 18.13L6.35 18.97Z" fill="hsl(245,100%,50%)"/><path d="M0 0L6.84 18.79L4.67 19.45Z" fill="hsl(250,100%,50%)"/><path d="M0 0L5.18 19.32L2.96 19.78Z" fill="hsl(255,100%,50%)"/><path d="M0 0L3.47 19.70L1.22 19.96Z" fill="hsl(260,100%,50%)"/><path d="M0 0L1.74 19.92L-0.52 19.99Z" fill="hsl(265,100%,50%)"/><path d="M0 0L0.00 20.00L-2.26 19.87Z" fill="hsl(270,100%,50%)"/><path d="M0 0L-1.74 19.92L-3.99 19.60Z" fill="hsl(275,100%,50%)"/><path d="M0 0L-3.47 19.70L-5.68 19.18Z" fill="hsl(280,100%,50%)"/><path d="M0 0L-5.18 19.32L-7.33 18.61Z" fill="hsl(285,100%,50%)"/><path d="M0 0L-6.84 18.79L-8.92 17.90Z" fill="hsl(290,100%,50%)"/><path d="M0 0L-8.45 18.13L-10.45 17.05Z" fill="hsl(295,100%,50%)"/><path d="M0 0L-10.00 17.32L-11.90 16.08Z" fill="hsl(300,100%,50%)"/><path d="M0 0L-11.47 16.38L-13.25 14.98Z" fill="hsl(305,100%,50%)"/><path d="M0 0L-12.86 15.32L-14.51 13.77Z" fill="hsl(310,100%,50%)"/><path d="M0 0L-14.14 14.14L-15.65 12.45Z" fill="hsl(315,100%,50%)"/><path d="M0 0L-15.32 12.86L-16.68 11.04Z" fill="hsl(320,100%,50%)"/><path d="M0 0L-16.38 11.47L-17.58 9.54Z" fill="hsl(325,100%,50%)"/><path d="M0 0L-17.32 10.00L-18.34 7.97Z" fill="hsl(330,100%,50%)"/><path d="M0 0L-18.13 8.45L-18.97 6.35Z" fill="hsl(335,100%,50%)"/><path d="M0 0L-18.79 6.84L-19.45 4.67Z" fill="hsl(340,100%,50%)"/><path d="M0 0L-19.32 5.18L-19.78 2.96Z" fill="hsl(345,100%,50%)"/><path d="M0 0L-19.70 3.47L-19.96 1.22Z" fill="hsl(350,100%,50%)"/><path d="M0 0L-19.92 1.74L-19.99 -0.52Z" fill="hsl(355,100%,50%)"/><path d="M0 0L-20.00 0.00L-19.87 -2.26Z" fill="hsl(0,100%,50%)"/><path d="M0 0L-19.92 -1.74L-19.60 -3.99Z" fill="hsl(5,100%,50%)"/><path d="M0 0L-19.70 -3.47L-19.18 -5.68Z" fill="hsl(10,100%,50%)"/><path d="M0 0L-19.32 -5.18L-18.61 -7.33Z" fill="hsl(15,100%,50%)"/><path d="M0 0L-18.79 -6.84L-17.90 -8.92Z" fill="hsl(20,100%,50%)"/><path d="M0 0L-18.13 -8.45L-17.05 -10.45Z" fill="hsl(25,100%,50%)"/><path d="M0 0L-17.32 -10.00L-16.08 -11.90Z" fill="hsl(30,100%,50%)"/><path d="M0 0L-16.38 -11.47L-14.98 -13.25Z" fill="hsl(35,100%,50%)"/><path d="M0 0L-15.32 -12.86L-13.77 -14.51Z" fill="hsl(40,100%,50%)"/><path d="M0 0L-14.14 -14.14L-12.45 -15.65Z" fill="hsl(45,100%,50%)"/><path d="M0 0L-12.86 -15.32L-11.04 -16.68Z" fill="hsl(50,100%,50%)"/><path d="M0 0L-11.47 -16.38L-9.54 -17.58Z" fill="hsl(55,100%,50%)"/><path d="M0 0L-10.00 -17.32L-7.97 -18.34Z" fill="hsl(60,100%,50%)"/><path d="M0 0L-8.45 -18.13L-6.35 -18.97Z" fill="hsl(65,100%,50%)"/><path d="M0 0L-6.84 -18.79L-4.67 -19.45Z" fill="hsl(70,100%,50%)"/><path d="M0 0L-5.18 -19.32L-2.96 -19.78Z" fill="hsl(75,100%,50%)"/><path d="M0 0L-3.47 -19.70L-1.22 -19.96Z" fill="hsl(80,100%,50%)"/><path d="M0 0L-1.74 -19.92L0.52 -19.99Z" fill="hsl(85,100%,50%)"/><path d="M0 0L-0.00 -20.00L2.26 -19.87Z" fill="hsl(90,100%,50%)"/><path d="M0 0L1.74 -19.92L3.99 -19.60Z" fill="hsl(95,100%,50%)"/><path d="M0 0L3.47 -19.70L5.68 -19.18Z" fill="hsl(100,100%,50%)"/><path d="M0 0L5.18 -19.32L7.33 -18.61Z" fill="hsl(105,100%,50%)"/><path d="M0 0L6.84 -18.79L8.92 -17.90Z" fill="hsl(110,100%,50%)"/><path d="M0 0L8.45 -18.13L10.45 -17.05Z" fill="hsl(115,100%,50%)"/><path d="M0 0L10.00 -17.32L11.90 -16.08Z" fill="hsl(120,100%,50%)"/><path d="M0 0L11.47 -16.38L13.25 -14.98Z" fill="hsl(125,100%,50%)"/><path d="M0 0L12.86 -15.32L14.51 -13.77Z" fill="hsl(130,100%,50%)"/><path d="M0 0L14.14 -14.14L15.65 -12.45Z" fill="hsl(135,100%,50%)"/><path d="M0 0L15.32 -12.86L16.68 -11.04Z" fill="hsl(140,100%,50%)"/><path d="M0 0L16.38 -11.47L17.58 -9.54Z" fill="hsl(145,100%,50%)"/><path d="M0 0L17.32 -10.00L18.34 -7.97Z" fill="hsl(150,100%,50%)"/><path d="M0 0L18.13 -8.45L18.97 -6.35Z" fill="hsl(155,100%,50%)"/><path d="M0 0L18.79 -6.84L19.45 -4.67Z" fill="hsl(160,100%,50%)"/><path d="M0 0L19.32 -5.18L19.78 -2.96Z" fill="hsl(165,100%,50%)"/><path d="M0 0L19.70 -3.47L19.96 -1.22Z" fill="hsl(170,100%,50%)"/><path d="M0 0L19.92 -1.74L19.99 0.52Z" fill="hsl(175,100%,50%)"/></g><path d="M-0.3 -13L12.7 7.8H-12.4Z" fill="url(#tri1)"/><path d="M-0.3 -13L12.7 7.8H-12.4Z" fill="url(#tri2)"/><path d="M-3.6 -18.6A3.6 3.6 0 0 0 3.6 -18.6" fill="none" stroke="#e8e8e8" stroke-width="1.1"/><rect x="-19.8" y="-4" width="3.4" height="2.4" fill="#ffb0b0"/></g></svg>
<div class="a" style="left:780px;top:177px;width:240px;height:10px;background:#000"></div>
<div class="a" style="left:780px;top:188px;width:240px;height:10px;background:linear-gradient(90deg,#000 0,#000 52%,#9a4040 100%)"></div>
<div class="a" style="left:780px;top:199px;width:240px;height:10px;background:linear-gradient(90deg,#000 0,#000 52%,#8c8c8c 100%)"></div>
<div class="a" style="left:780px;top:187px;width:240px;height:1px;background:#4a4a4a"></div>
<div class="a" style="left:780px;top:198px;width:240px;height:1px;background:#4a4a4a"></div>
<div class="a" style="left:894.5px;top:176px;width:1.6px;height:33px;background:#a8a8a8"></div>
<div class="a" style="left:904px;top:176px;width:1.6px;height:33px;background:#a8a8a8"></div>
<div class="a" style="left:895px;top:186.6px;width:10px;height:1.4px;background:#a8a8a8"></div>
<div class="a" style="left:895px;top:197.6px;width:10px;height:1.4px;background:#a8a8a8"></div>
<svg style="left:780px;top:212px" width="16" height="16"><rect x="0.5" y="0.5" width="15" height="15" rx="3" fill="#3e3e3e"/><path d="M11.8 3.6A5.6 5.6 0 0 0 2.6 9.6L4.5 8" fill="none" stroke="#d8d8d8" stroke-width="1.6"/><path d="M4.2 12.4A5.6 5.6 0 0 0 13.4 6.4L11.5 8" fill="none" stroke="#d8d8d8" stroke-width="1.6"/></svg>
<svg style="left:1023px;top:213px" width="14" height="14"><circle cx="7" cy="7" r="5.6" fill="none" stroke="#d8d8d8" stroke-width="1.5"/><path d="M3 3L11 11" stroke="#d8d8d8" stroke-width="1.5"/></svg>
<svg style="left:903px;top:231px" width="18" height="2"><rect x="0" y="0" width="1.6" height="1.6" fill="#8a8a8a"/><rect x="3" y="0" width="1.6" height="1.6" fill="#8a8a8a"/><rect x="6" y="0" width="1.6" height="1.6" fill="#8a8a8a"/><rect x="9" y="0" width="1.6" height="1.6" fill="#8a8a8a"/><rect x="12" y="0" width="1.6" height="1.6" fill="#8a8a8a"/><rect x="15" y="0" width="1.6" height="1.6" fill="#8a8a8a"/></svg>
<svg style="left:784px;top:236px" width="16" height="16"><circle cx="8" cy="8" r="7.3" fill="none" stroke="#d8d8d8" stroke-width="1.2"/><rect x="4.2" y="7.6" width="7.6" height="4.6" fill="#d8d8d8"/><path d="M5.6 7.6V6A2.4 2.4 0 0 1 10.4 6" fill="none" stroke="#d8d8d8" stroke-width="1.2"/></svg>
<div class="t" style="left:805px;top:239px;font-size:11px;color:#d6d6d6;">图层</div>
<svg style="left:999px;top:237px" width="15" height="14"><rect x="0.6" y="5.6" width="8" height="7.6" fill="none" stroke="#d8d8d8" stroke-width="1.2"/><path d="M5 5.6V0.6H13.6V8.6H8.6" fill="none" stroke="#d8d8d8" stroke-width="1.2"/></svg>
<svg style="left:1023px;top:237.5px" width="12" height="12"><path d="M0.8 0.8L11.2 11.2M11.2 0.8L0.8 11.2" stroke="#d8d8d8" stroke-width="1.4"/></svg>
<div class="a" style="left:781px;top:255px;width:225px;height:31px;border:1px solid #2f2f2f;border-radius:3px;background:linear-gradient(#4c4c4c,#404040)"></div>
<div class="t" style="left:785px;top:265px;font-size:11px;color:#dedede;">正常</div>
<svg style="left:991px;top:269px" width="8" height="4"><path d="M0 0H7.5L3.75 4Z" fill="#9a9a9a"/></svg>
<svg style="left:1015px;top:260px" width="18" height="18"><path d="M1.2 1.2H16.8L10.6 8.6V16.6L7.4 14.6V8.6Z" fill="none" stroke="#d8d8d8" stroke-width="1.3" stroke-linejoin="round"/></svg>
<svg style="left:1029px;top:281px" width="6" height="4"><path d="M0 0H5.5L2.75 3Z" fill="#8a8a8a"/></svg>
<div class="a" style="left:781px;top:289px;width:225px;height:29px;border:1px solid #333;border-radius:3px;background:#3c3c3c"></div>
<div class="a" style="left:782px;top:290px;width:210px;height:27px;background:#53728f;border-radius:2px 0 0 2px"></div>
<div class="a" style="left:992px;top:289px;width:14px;height:29px;border:1px solid #585858;border-radius:0 3px 3px 0;background:#3e3e3e"></div>
<div class="t" style="left:846px;top:297px;font-size:11px;color:#e6eaee;">不透明度: 100%</div>
<svg style="left:996px;top:294px" width="8" height="18"><path d="M0 4H7.5L3.75 0Z" fill="#6c6c6c"/><path d="M0 12H7.5L3.75 16Z" fill="#a8a8a8"/></svg>
<svg style="left:1017px;top:297px" width="14" height="12"><path d="M0.5 1.6H13.5M0.5 5.6H13.5M0.5 9.6H13.5" stroke="#d8d8d8" stroke-width="1.9"/></svg>
<svg style="left:1029px;top:313px" width="6" height="4"><path d="M0 0H5.5L2.75 3Z" fill="#8a8a8a"/></svg>
<div class="a" style="left:781px;top:320px;width:245px;height:70px;background:#3a3a3a"></div>
<div class="a" style="left:804px;top:321px;width:221px;height:26px;background:#53728f"></div>
<div class="a" style="left:830px;top:321px;width:1.5px;height:26px;background:#3b4d5e"></div>
<div class="a" style="left:845px;top:321px;width:1.5px;height:26px;background:#3b4d5e"></div>
<div class="a" style="left:967px;top:321px;width:1.5px;height:26px;background:#3b4d5e"></div>
<div class="a" style="left:986px;top:321px;width:1.5px;height:26px;background:#3b4d5e"></div>
<div class="a" style="left:1005px;top:321px;width:1.5px;height:26px;background:#3b4d5e"></div>
<div class="a" style="left:781px;top:347px;width:245px;height:1px;background:#2e2e2e"></div>
<div class="a" style="left:781px;top:373px;width:245px;height:1px;background:#2e2e2e"></div>
<svg style="left:784px;top:327px" width="16" height="14"><path d="M1.2 6.6C3.8 1.6 12.2 1.6 14.8 6.6" fill="none" stroke="#d8d8d8" stroke-width="1.2"/><circle cx="8" cy="5.8" r="3.6" fill="#d8d8d8"/><path d="M1.6 8.6C4.6 12.6 11.4 12.6 14.4 8.6" fill="none" stroke="#d8d8d8" stroke-width="1.1"/></svg>
<svg style="left:784px;top:353px" width="16" height="14"><path d="M1.2 6.6C3.8 1.6 12.2 1.6 14.8 6.6" fill="none" stroke="#d8d8d8" stroke-width="1.2"/><circle cx="8" cy="5.8" r="3.6" fill="#d8d8d8"/><path d="M1.6 8.6C4.6 12.6 11.4 12.6 14.4 8.6" fill="none" stroke="#d8d8d8" stroke-width="1.1"/></svg>
<svg style="left:784px;top:379px" width="16" height="14"><path d="M1.2 6.6C3.8 1.6 12.2 1.6 14.8 6.6" fill="none" stroke="#d8d8d8" stroke-width="1.2"/><circle cx="8" cy="5.8" r="3.6" fill="#d8d8d8"/><path d="M1.6 8.6C4.6 12.6 11.4 12.6 14.4 8.6" fill="none" stroke="#d8d8d8" stroke-width="1.1"/></svg>
<div class="a" style="left:806px;top:326px;width:22px;height:16px;background:#fff;border:1px solid #2a3a4a"></div>
<svg style="left:807px;top:327px" width="20" height="14"><g fill="#000"><rect x="12" y="4" width="1.5" height="1.5"/><rect x="15" y="6" width="1.5" height="2"/><rect x="13" y="8" width="1.5" height="1.5"/><rect x="17" y="10" width="1.5" height="1.5"/><rect x="11" y="11" width="1.2" height="1.2"/></g><rect x="4" y="3" width="1.5" height="1.5" fill="#d8a050"/></svg>
<svg style="left:807px;top:352px" width="20" height="20"><defs><pattern id="lchk" width="6" height="6" patternUnits="userSpaceOnUse"><rect width="6" height="6" fill="#fff"/><rect width="3" height="3" fill="#d0d0d0"/><rect x="3" y="3" width="3" height="3" fill="#d0d0d0"/></pattern></defs><rect width="20" height="20" fill="url(#lchk)"/></svg>
<div class="a" style="left:810px;top:379px;width:14px;height:11px;background:#fff"></div>
<svg style="left:832px;top:322px" width="12" height="11"><path d="M3.5 0.8H10.8V7L8 10.2H3.5V7" fill="none" stroke="#dde4ea" stroke-width="1.1"/><path d="M0.8 1.5L6 6.5" stroke="#dde4ea" stroke-width="1.1"/></svg>
<svg style="left:832px;top:348px" width="12" height="11"><path d="M3.5 0.8H10.8V7L8 10.2H3.5V7" fill="none" stroke="#d0d0d0" stroke-width="1.1"/><path d="M0.8 1.5L6 6.5" stroke="#d0d0d0" stroke-width="1.1"/></svg>
<svg style="left:832px;top:374px" width="12" height="11"><path d="M3.5 0.8H10.8V7L8 10.2H3.5V7" fill="none" stroke="#d0d0d0" stroke-width="1.1"/><path d="M0.8 1.5L6 6.5" stroke="#d0d0d0" stroke-width="1.1"/></svg>
<div class="t" style="left:846px;top:329px;font-size:11px;color:#e2e8ee;">颜料图层 2 (来自粘贴)</div>
<div class="t" style="left:846px;top:355px;font-size:11px;color:#d4d4d4;">颜料图层 1</div>
<div class="a" style="left:781px;top:373px;width:245px;height:17px;overflow:hidden"><div class="t" style="left:65px;top:8px;font-size:11px;color:#d4d4d4">背景</div></div>
<svg style="left:970px;top:327px" width="13" height="14"><rect x="0.5" y="6" width="12" height="8" fill="#98acbe"/><path d="M7.6 6V3.4A2.6 2.6 0 0 1 12.6 3" fill="none" stroke="#98acbe" stroke-width="1.3"/></svg>
<svg style="left:970px;top:353px" width="13" height="14"><rect x="0.5" y="6" width="12" height="8" fill="#8a8a8a"/><path d="M7.6 6V3.4A2.6 2.6 0 0 1 12.6 3" fill="none" stroke="#8a8a8a" stroke-width="1.3"/></svg>
<svg style="left:970px;top:380px" width="14" height="10"><path d="M1 9.2H13M2.4 8.6A4.6 4.6 0 0 1 11.6 8.6" fill="none" stroke="#e8e8e8" stroke-width="1.6"/></svg>
<div class="t" style="left:988.5px;top:324px;font-size:19px;color:#98acbe;font-style:italic">α</div>
<div class="t" style="left:988.5px;top:350px;font-size:19px;color:#7e7e7e;font-style:italic">α</div>
<div class="a" style="left:981px;top:373px;width:30px;height:17px;overflow:hidden"><div class="t" style="left:7.5px;top:3px;font-size:19px;color:#6e6e6e;font-style:italic">α</div></div>
<svg style="left:1007px;top:327px" width="15" height="15"><rect x="0" y="0" width="5" height="5" fill="#7d97ae"/><rect x="5" y="0" width="5" height="5" fill="#a5b9cb"/><rect x="10" y="0" width="5" height="5" fill="#7d97ae"/><rect x="0" y="5" width="5" height="5" fill="#a5b9cb"/><rect x="5" y="5" width="5" height="5" fill="#7d97ae"/><rect x="10" y="5" width="5" height="5" fill="#a5b9cb"/><rect x="0" y="10" width="5" height="5" fill="#7d97ae"/><rect x="5" y="10" width="5" height="5" fill="#a5b9cb"/><rect x="10" y="10" width="5" height="5" fill="#7d97ae"/></svg>
<svg style="left:1007px;top:353px" width="15" height="15"><rect x="0" y="0" width="5" height="5" fill="#6a6a6a"/><rect x="5" y="0" width="5" height="5" fill="#8a8a8a"/><rect x="10" y="0" width="5" height="5" fill="#6a6a6a"/><rect x="0" y="5" width="5" height="5" fill="#8a8a8a"/><rect x="5" y="5" width="5" height="5" fill="#6a6a6a"/><rect x="10" y="5" width="5" height="5" fill="#8a8a8a"/><rect x="0" y="10" width="5" height="5" fill="#6a6a6a"/><rect x="5" y="10" width="5" height="5" fill="#8a8a8a"/><rect x="10" y="10" width="5" height="5" fill="#6a6a6a"/></svg>
<div class="a" style="left:1007px;top:379px;width:15px;height:10px;overflow:hidden"><svg style="left:0;top:0" width="15" height="15"><rect x="0" y="0" width="5" height="5" fill="#6a6a6a"/><rect x="5" y="0" width="5" height="5" fill="#8a8a8a"/><rect x="10" y="0" width="5" height="5" fill="#6a6a6a"/><rect x="0" y="5" width="5" height="5" fill="#8a8a8a"/><rect x="5" y="5" width="5" height="5" fill="#6a6a6a"/><rect x="10" y="5" width="5" height="5" fill="#8a8a8a"/></svg></div>
<div class="a" style="left:1026px;top:320px;width:13px;height:70px;background:#3a3a3a"></div>
<div class="a" style="left:1026px;top:320px;width:13px;height:15px;border:1px solid #555;background:#404040"></div>
<svg style="left:1028px;top:325px" width="9" height="5"><path d="M0 5H8.5L4.25 0Z" fill="#b0b0b0"/></svg>
<div class="a" style="left:1027px;top:336px;width:11px;height:33px;border:1px solid #4e4e4e;background:#3a3a3a"></div>
<div class="a" style="left:1026px;top:375px;width:13px;height:15px;border:1px solid #555;background:#404040"></div>
<svg style="left:1028px;top:380px" width="9" height="5"><path d="M0 0H8.5L4.25 5Z" fill="#b0b0b0"/></svg>
<div class="a" style="left:781px;top:390px;width:260px;height:1px;background:#3c3c3c"></div>
<svg style="left:785px;top:395px" width="20" height="20"><path d="M10 1V19M1 10H19" stroke="#d8d8d8" stroke-width="2"/></svg>
<svg style="left:812px;top:403px" width="8" height="4"><path d="M0 0H7.5L3.75 4Z" fill="#9a9a9a"/></svg>
<svg style="left:828px;top:395px" width="21" height="21"><path d="M1.2 5.2V19.8H15.8" fill="none" stroke="#d8d8d8" stroke-width="1.6"/><rect x="5" y="1" width="15" height="15" fill="none" stroke="#d8d8d8" stroke-width="1.6"/></svg>
<svg style="left:860px;top:397px" width="22" height="14"><path d="M1.5 2L11 11.5L20.5 2" fill="none" stroke="#d8d8d8" stroke-width="2"/></svg>
<svg style="left:892px;top:397px" width="22" height="14"><path d="M1.5 12L11 2.5L20.5 12" fill="none" stroke="#d8d8d8" stroke-width="2"/></svg>
<svg style="left:924px;top:395px" width="22" height="20"><path d="M1 4H21M1 10H21M1 16H21" stroke="#d8d8d8" stroke-width="1.6"/><rect x="12.5" y="1.2" width="3" height="5.6" fill="#d8d8d8"/><rect x="5" y="7.2" width="3" height="5.6" fill="#d8d8d8"/><rect x="12.5" y="13.2" width="3" height="5.6" fill="#d8d8d8"/></svg>
<svg style="left:1015px;top:394px" width="20" height="22"><path d="M7 1.4H13V3.4" fill="none" stroke="#d8d8d8" stroke-width="1.4"/><rect x="1" y="3.4" width="18" height="2.6" fill="#d8d8d8"/><path d="M2.6 7.2H17.4L16.2 21H3.8Z" fill="#d8d8d8"/></svg>
<svg style="left:903px;top:421px" width="18" height="2"><rect x="0" y="0" width="1.6" height="1.6" fill="#8a8a8a"/><rect x="3" y="0" width="1.6" height="1.6" fill="#8a8a8a"/><rect x="6" y="0" width="1.6" height="1.6" fill="#8a8a8a"/><rect x="9" y="0" width="1.6" height="1.6" fill="#8a8a8a"/><rect x="12" y="0" width="1.6" height="1.6" fill="#8a8a8a"/><rect x="15" y="0" width="1.6" height="1.6" fill="#8a8a8a"/></svg>
<svg style="left:784px;top:427px" width="16" height="16"><circle cx="8" cy="8" r="7.3" fill="none" stroke="#d8d8d8" stroke-width="1.2"/><rect x="4.2" y="7.6" width="7.6" height="4.6" fill="#d8d8d8"/><path d="M5.6 7.6V6A2.4 2.4 0 0 1 10.4 6" fill="none" stroke="#d8d8d8" stroke-width="1.2"/></svg>
<div class="t" style="left:805px;top:430px;font-size:11px;color:#d6d6d6;">笔刷预设</div>
<svg style="left:999px;top:428px" width="15" height="14"><rect x="0.6" y="5.6" width="8" height="7.6" fill="none" stroke="#d8d8d8" stroke-width="1.2"/><path d="M5 5.6V0.6H13.6V8.6H8.6" fill="none" stroke="#d8d8d8" stroke-width="1.2"/></svg>
<svg style="left:1023px;top:428.5px" width="12" height="12"><path d="M0.8 0.8L11.2 11.2M11.2 0.8L0.8 11.2" stroke="#d8d8d8" stroke-width="1.4"/></svg>
<div class="a" style="left:781px;top:446px;width:154px;height:24px;border:1px solid #2f2f2f;border-radius:3px;background:linear-gradient(#4c4c4c,#404040)"></div>
<div class="t" style="left:785px;top:452px;font-size:11px;color:#dedede;">全部</div>
<svg style="left:920px;top:456px" width="8" height="4"><path d="M0 0H7.5L3.75 4Z" fill="#9a9a9a"/></svg>
<div class="a" style="left:937px;top:446px;width:55px;height:24px;border:1px solid #2f2f2f;border-radius:3px;background:linear-gradient(#4c4c4c,#424242)"></div>
<svg style="left:941px;top:449px" width="11" height="17"><path d="M1 1H10V16L5.5 11.5L1 16Z" fill="none" stroke="#d8d8d8" stroke-width="1.6" stroke-linejoin="round"/></svg>
<div class="t" style="left:957px;top:452px;font-size:11px;color:#dedede;">标签</div>
<svg style="left:984px;top:462px" width="6" height="4"><path d="M0 0H5.5L2.75 3Z" fill="#9a9a9a"/></svg>
<div class="a" style="left:994px;top:446px;width:22px;height:24px;border:1px solid #2f2f2f;border-radius:3px;background:linear-gradient(#4c4c4c,#424242)"></div>
<svg style="left:999px;top:452px" width="13" height="11"><path d="M0.5 1.2H12.5M0.5 5.5H12.5M0.5 9.8H12.5" stroke="#d8d8d8" stroke-width="1.7"/></svg>
<svg style="left:1020px;top:447px" width="17" height="19"><rect x="0.6" y="0.6" width="15.8" height="17" fill="none" stroke="#d8d8d8" stroke-width="1.2"/><path d="M11 2.5V8" stroke="#d8d8d8" stroke-width="1.1" stroke-dasharray="1.1 1.1"/></svg>
<div class="a" style="left:781px;top:470px;width:241px;height:137px;background:#3a3a3a"></div>
<div class="a" style="left:782px;top:471px;width:58px;height:15px;background:#d7d7d7"></div>
<div class="a" style="left:842px;top:471px;width:58px;height:15px;background:#d7d7d7"></div>
<div class="a" style="left:902px;top:471px;width:58px;height:15px;background:#d7d7d7"></div>
<div class="a" style="left:962px;top:471px;width:58px;height:15px;background:#d7d7d7"></div>
<div class="a" style="left:782px;top:488px;width:58px;height:58px;background:#d7d7d7"></div>
<div class="a" style="left:842px;top:488px;width:58px;height:58px;background:#d7d7d7"></div>
<div class="a" style="left:902px;top:488px;width:58px;height:58px;background:#d7d7d7"></div>
<div class="a" style="left:962px;top:488px;width:58px;height:58px;background:#d7d7d7"></div>
<div class="a" style="left:782px;top:548px;width:58px;height:58px;background:#d7d7d7"></div>
<div class="a" style="left:842px;top:548px;width:58px;height:58px;background:#d7d7d7"></div>
<div class="a" style="left:900px;top:546px;width:62px;height:62px;background:#56758f"></div>
<div class="a" style="left:903px;top:549px;width:56px;height:56px;background:#8fbfe2"></div>
<div class="a" style="left:962px;top:548px;width:58px;height:58px;background:#d7d7d7"></div>
<svg style="left:792px;top:471px" width="45" height="14"><defs><pattern id="bchk" width="4" height="4" patternUnits="userSpaceOnUse"><rect width="4" height="4" fill="#ececec"/><rect width="2" height="2" fill="#a8a8a8"/><rect x="2" y="2" width="2" height="2" fill="#a8a8a8"/></pattern></defs><path d="M0 0H20C24 4 30 6 44 0V3C36 12 22 16 10 10C6 8 2 4 0 2Z" fill="url(#bchk)" opacity="0.85"/></svg>
<svg style="left:858px;top:471px" width="40" height="14"><path d="M0 0C6 12 26 14 36 0" fill="none" stroke="url(#bchk)" stroke-width="4"/></svg>
<svg style="left:912px;top:471px" width="42" height="14"><path d="M2 2C10 10 30 12 40 2V6C30 14 10 14 2 8Z" fill="url(#bchk)" opacity="0.6"/></svg>
<svg style="left:962px;top:471px" width="58" height="14"><defs><linearGradient id="bg4" x1="0" x2="1"><stop offset="0" stop-color="#2a2a2a"/><stop offset="0.45" stop-color="#2a2a2a"/><stop offset="0.75" stop-color="#d7d7d7" stop-opacity="0"/></linearGradient></defs><rect x="0" y="0" width="58" height="14" fill="url(#bg4)"/></svg>
<svg style="left:782px;top:488px" width="58" height="58"><defs><clipPath id="cp782488"><rect width="58" height="58"/></clipPath></defs><g clip-path="url(#cp782488)"><path d="M30 25L60 -5" stroke="#2a2a2a" stroke-width="10"/><path d="M32 21L60 -7" stroke="#555" stroke-width="2"/><path d="M22 31L31 22L36 27L27 36Z" fill="#1e1e1e"/><path d="M21 30.5L28 37.5L21.5 37Z M21 30.5L21.5 37L22 36Z" fill="#ccc"/><path d="M22.5 29L29 35.5L21.5 37.5Z" fill="#d8d8d8" stroke="#888" stroke-width="0.6"/><path d="M16 37L22.5 29L29 35.5Z" fill="#c0c0c0"/><path d="M20 47C28 46.5 44 44 60 38" stroke="#1c1c1c" stroke-width="8" stroke-linecap="round" fill="none"/></g></svg>
<svg style="left:842px;top:488px" width="58" height="58"><defs><clipPath id="cp842488"><rect width="58" height="58"/></clipPath></defs><g clip-path="url(#cp842488)"><path d="M30 25L60 -5" stroke="#1a1a1a" stroke-width="10"/><path d="M32 21L60 -7" stroke="#444" stroke-width="2"/><path d="M17 37L23 27L32 34Z" fill="#151515" stroke="#666" stroke-width="0.6"/><path d="M22 28L34 33L31 22Z" fill="#222"/><defs><linearGradient id="st2" x1="0" x2="1"><stop offset="0" stop-color="#bcbcbc"/><stop offset="1" stop-color="#3a3a3a"/></linearGradient></defs><path d="M12 40C12 50 30 50 60 40" stroke="url(#st2)" stroke-width="6" fill="none" stroke-linecap="round"/></g></svg>
<svg style="left:902px;top:488px" width="58" height="58"><defs><clipPath id="cp902488"><rect width="58" height="58"/></clipPath></defs><g clip-path="url(#cp902488)"><path d="M30 25L60 -5" stroke="#e6e6e6" stroke-width="10"/><path d="M34 23L60 -3" stroke="#b8b8b8" stroke-width="1.5"/><path d="M29 25L34 30" stroke="#c89070" stroke-width="1.6"/><path d="M17 37L23 26L34 32Z" fill="#f4f4f4" stroke="#999" stroke-width="0.6"/><defs><linearGradient id="st3" x1="0" x2="1"><stop offset="0" stop-color="#aaa"/><stop offset="1" stop-color="#333"/></linearGradient></defs><path d="M16 46C22 52 30 42 40 44S52 44 60 42" stroke="url(#st3)" stroke-width="6" fill="none" stroke-linecap="round" opacity="0.8"/></g></svg>
<svg style="left:962px;top:488px" width="58" height="58"><defs><clipPath id="cp962488"><rect width="58" height="58"/></clipPath></defs><g clip-path="url(#cp962488)"><path d="M30 25L60 -5" stroke="#8a8a8a" stroke-width="10"/><path d="M34 21L60 -5" stroke="#b0b0b0" stroke-width="2"/><path d="M17 37L23 26L34 32Z" fill="#eaeaea" stroke="#888" stroke-width="0.6"/><path d="M16 46C24 50 32 42 42 46S54 44 60 42" stroke="#9a9a9a" stroke-width="6" fill="none" stroke-linecap="round" opacity="0.8"/></g></svg>
<svg style="left:782px;top:548px" width="58" height="58"><defs><clipPath id="cp782548"><rect width="58" height="58"/></clipPath></defs><g clip-path="url(#cp782548)"><path d="M40 12L60 -8" stroke="#3a3a3a" stroke-width="5"/><path d="M26 26L41 11" stroke="#d0d0d0" stroke-width="4.5"/><path d="M27 25L41 11" stroke="#888" stroke-width="1.2"/><path d="M26 26C22 26 18 30 16 34L13 37C18 37 24 34 27 28Z" fill="#2a1612"/><path d="M14 44C20 56 26 44 32 50S46 52 60 44" stroke="#2a2a2a" stroke-width="5.5" fill="none" stroke-linecap="round"/></g></svg>
<svg style="left:842px;top:548px" width="58" height="58"><defs><clipPath id="cp842548"><rect width="58" height="58"/></clipPath></defs><g clip-path="url(#cp842548)"><path d="M40 12L60 -8" stroke="#e0a030" stroke-width="5"/><path d="M26 26L41 11" stroke="#d8d8d8" stroke-width="4.5"/><path d="M27 25L41 11" stroke="#999" stroke-width="1.2"/><path d="M26 26C22 26 18 30 16 34L13 37C18 37 24 34 27 28Z" fill="#6a3a26"/><defs><linearGradient id="st6" x1="0" x2="1"><stop offset="0" stop-color="#c8c8c8"/><stop offset="1" stop-color="#3a3a3a"/></linearGradient></defs><path d="M14 46C20 56 26 44 32 50S46 52 60 44" stroke="url(#st6)" stroke-width="5.5" fill="none" stroke-linecap="round"/></g></svg>
<svg style="left:902px;top:548px" width="58" height="58"><defs><clipPath id="cp902548"><rect width="58" height="58"/></clipPath></defs><g clip-path="url(#cp902548)"><path d="M42 10L58 -4" stroke="#8a5a30" stroke-width="5"/><path d="M30 22L43 9" stroke="#4a7aa8" stroke-width="4"/><path d="M31 21L43 9" stroke="#bcd6ee" stroke-width="1"/><path d="M22 32L26 25L31 22L29 28Z" fill="#1c2c44"/><path d="M10 48C20 36 24 46 20 50S30 46 36 44S50 42 56 38" stroke="#2a4a6e" stroke-width="1.6" fill="none"/></g></svg>
<svg style="left:962px;top:548px" width="58" height="58"><defs><clipPath id="cp962548"><rect width="58" height="58"/></clipPath></defs><g clip-path="url(#cp962548)"><path d="M30 26L62 -6" stroke="#2a74bc" stroke-width="11"/><path d="M34 20L62 -8" stroke="#6aaae0" stroke-width="2"/><path d="M21 33L28 22L37 29Z" fill="#d9b68a"/><path d="M18 37L21 33L24 35Z" fill="#333"/><path d="M10 40C14 38 18 42 12 44S18 48 12 50" stroke="#222" stroke-width="3" fill="none"/><path d="M20 56L58 40" stroke="#a0a0a0" stroke-width="7" stroke-dasharray="1.5 1.3" fill="none"/></g></svg>
<div class="a" style="left:1026px;top:471px;width:13px;height:136px;background:#3a3a3a"></div>
<div class="a" style="left:1026px;top:471px;width:13px;height:15px;border:1px solid #555;background:#404040"></div>
<svg style="left:1028px;top:476px" width="9" height="5"><path d="M0 5H8.5L4.25 0Z" fill="#b0b0b0"/></svg>
<div class="a" style="left:1027px;top:487px;width:11px;height:26px;border:1px solid #555;background:#3c3c3c"></div>
<div class="a" style="left:1026px;top:592px;width:13px;height:15px;border:1px solid #555;background:#404040"></div>
<svg style="left:1028px;top:597px" width="9" height="5"><path d="M0 0H8.5L4.25 5Z" fill="#b0b0b0"/></svg>
<div class="a" style="left:780px;top:608px;width:130px;height:24px;border-radius:3px;background:#393939;border:1px solid #353535"></div>
<div class="t" style="left:783px;top:614px;font-size:11px;color:#7c7c7c;">搜索</div>
<div class="a" style="left:916px;top:612px;width:15px;height:16px;background:#3a3a3a;border-radius:2px"></div>
<svg style="left:918px;top:615px" width="11" height="11"><path d="M1 5.5L4 9.5L10 1" fill="none" stroke="#dcdcdc" stroke-width="1.6"/></svg>
<div class="t" style="left:935px;top:614px;font-size:11px;color:#dcdcdc;">仅在当前标签内搜索</div>
<!--/DOCK-->








</body></html>
